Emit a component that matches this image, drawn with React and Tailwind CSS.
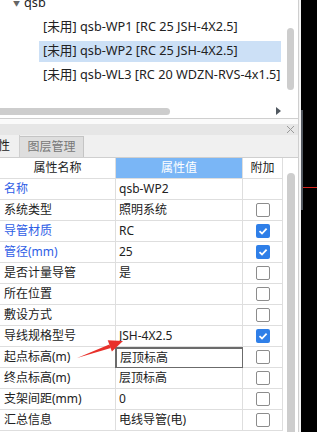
import React from 'react';

const rows = [
  { name: '名称', value: 'qsb-WP2', blue: true, box: null },
  { name: '系统类型', value: '照明系统', box: false },
  { name: '导管材质', value: 'RC', blue: true, box: true },
  { name: '管径(mm)', value: '25', blue: true, box: true },
  { name: '是否计量导管', value: '是', box: false },
  { name: '所在位置', value: '', box: false },
  { name: '敷设方式', value: '', box: false },
  { name: '导线规格型号', value: 'JSH-4X2.5', box: true },
  { name: '起点标高(m)', value: '层顶标高', box: false, editing: true },
  { name: '终点标高(m)', value: '层顶标高', box: false },
  { name: '支架间距(mm)', value: '0', box: false },
  { name: '汇总信息', value: '电线导管(电)', box: false },
];

const items = [
  { text: '[未用] qsb-WP1 [RC 25 JSH-4X2.5]' },
  { text: '[未用] qsb-WP2 [RC 25 JSH-4X2.5]', selected: true },
  { text: '[未用] qsb-WL3 [RC 20 WDZN-RVS-4x1.5]' },
];

const Check = ({ checked }) => {
  if (checked === null) return null;
  if (checked) {
    return (
      <div className="w-[14px] h-[14px] rounded-[2px] bg-[#2f7fe8] flex items-center justify-center">
        <svg width="10" height="10" viewBox="0 0 10 10">
          <path d="M1.5 5.2 L4 7.5 L8.6 2.6" fill="none" stroke="white" strokeWidth="1.8" />
        </svg>
      </div>
    );
  }
  return <div className="w-[14px] h-[14px] rounded-[2px] border border-[#8c8c8c] bg-white" />;
};

export default function App() {
  return (
    <div className="w-[317px] h-[432px] flex bg-black overflow-hidden text-[12px] text-[#222] font-['Noto_Sans','Noto_Sans_CJK_SC',sans-serif]">
      <div className="w-[299px] h-full flex flex-col bg-white border-r border-[#cfcfcf]">
        {/* tree panel */}
        <div className="h-[118px] flex flex-col overflow-hidden">
          <div className="flex-1 flex overflow-hidden text-[12.7px]">
            <div className="flex-1 flex flex-col">
              <div className="h-[24px] -mt-[9px] flex items-center pl-[13px] gap-[4px] shrink-0">
                <span className="text-[7px] text-[#666] leading-none">▼</span>
                <span>qsb</span>
              </div>
              {items.map((it, i) => (
                <div key={i} className="h-[24px] flex items-center pl-[39px] pr-[3px] shrink-0">
                  <div className={`h-[21px] flex-1 flex items-center pl-[4px] ${it.selected ? 'bg-[#cce0f6]' : ''}`}>
                    <span className="whitespace-nowrap">{it.text}</span>
                  </div>
                </div>
              ))}
            </div>
            <div className="w-[14px] flex justify-center pt-[28px] pr-[2px]">
              <div className="w-[7px] h-[62px] rounded-full bg-[#cdcdcd]" />
            </div>
          </div>
          <div className="h-[10px] flex items-start shrink-0">
            <div className="w-[170px] h-[7px] rounded-r-full bg-[#cdcdcd]" />
            <div className="flex-1 flex justify-end pr-[17px] -mt-[1px]">
              <svg width="5" height="8" viewBox="0 0 5 8"><path d="M0 0 L5 4 L0 8 Z" fill="#505860" /></svg>
            </div>
          </div>
        </div>
        <div className="h-px bg-[#cfcfcf]" />
        <div className="h-[5px] bg-[#fafafa]" />
        {/* title bar */}
        <div className="h-[11px] bg-[#e6e6e6] flex items-center justify-end pr-[3px]">
          <svg width="9" height="9" viewBox="0 0 9 9"><path d="M1 1 L8 8 M8 1 L1 8" stroke="#9a9a9a" strokeWidth="1" /></svg>
        </div>
        {/* tabs */}
        <div className="h-[23px] bg-[#f0f0f0] flex items-stretch border-b border-[#cfcfcf]">
          <div className="w-[20px] flex items-center justify-end pr-[9px] text-[#222] border-r border-[#cfcfcf] overflow-hidden">
            <span className="whitespace-nowrap">性</span>
          </div>
          <div className="w-[64px] flex items-center justify-center bg-[#dedede] border-t border-r border-[#c4c4c4] text-[#777] mt-[1px]">
            图层管理
          </div>
        </div>
        {/* table */}
        <div className="flex-1 flex overflow-hidden">
          <div className="w-[283px] flex flex-col relative">
            <div className="grid grid-cols-[116px_127px_40px] h-[21px]">
              <div className="border-r border-b border-[#dedede] flex items-center justify-center">属性名称</div>
              <div className="border-r border-b border-[#dedede] bg-[#7ab6f6] text-white flex items-center justify-center">属性值</div>
              <div className="border-r border-b border-[#dedede] flex items-center justify-center">附加</div>
            </div>
            {rows.map((r, i) => (
              <div key={i} className="grid grid-cols-[116px_127px_40px] h-[21px]">
                <div className={`border-r border-b border-[#dedede] flex items-center pl-[4px] whitespace-nowrap ${r.blue ? 'text-[#2f5ee6]' : ''}`}>{r.name}</div>
                <div className={`border-r border-b flex items-center whitespace-nowrap ${r.editing ? 'border-2 border-[#6b6b6b] -ml-px pl-[3px]' : 'border-[#dedede] pl-[3px]'}`}>{r.value}</div>
                <div className="border-r border-b border-[#dedede] flex items-center justify-center">
                  <Check checked={r.box} />
                </div>
              </div>
            ))}
            <svg className="absolute left-[72px] top-[174px]" width="60" height="30" viewBox="0 0 60 30">
              <path d="M5 26 L37.3 12.5 L38.8 16 Z" fill="#e8302a" />
              <path d="M51 9 L35.7 8.3 L39.9 19.5 Z" fill="#e8302a" />
            </svg>
          </div>
          <div className="flex-1 flex justify-center pt-[15px]">
            <div className="w-[8px] h-full rounded-t-full bg-[#cdcdcd]" />
          </div>
        </div>
      </div>
      <div className="w-[2px] bg-[#f4f4f4]" />
      <div className="flex-1 flex">
        <div className="w-[2px] flex flex-col">
          <div className="mt-[110px] h-[100px] bg-[#535961]" />
        </div>
        <div className="flex-1 flex flex-col">
          <div className="mt-[187px] h-px bg-[#d8261e]" />
        </div>
      </div>
    </div>
  );
}
